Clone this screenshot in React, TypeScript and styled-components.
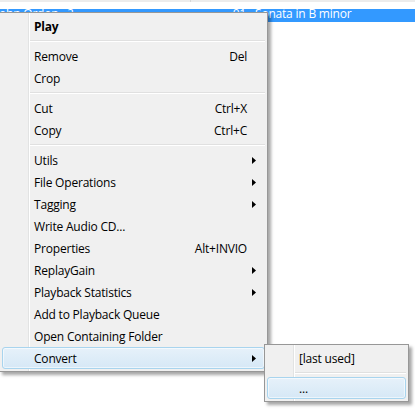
import React from "react";
import styled, { createGlobalStyle } from "styled-components";

const GlobalStyle = createGlobalStyle`
  html, body { margin: 0; padding: 0; background: #ffffff; }
  body { font-family: "Segoe UI", "Open Sans", "Noto Sans", sans-serif; font-size: 12px; }
`;

const Page = styled.div`
  position: relative;
  width: 415px;
  height: 410px;
  overflow: hidden;
  background: #ffffff;
`;

const HeaderEdge = styled.div`
  height: 2px;
  background: linear-gradient(to right, #ececec 0, #ececec 190px, #d6d6d6 190px, #d6d6d6 191px, #ececec 191px);
`;

const List = styled.div`
  padding-top: 7px;
`;

const Row = styled.div<{ $selected?: boolean }>`
  display: grid;
  grid-template-columns: 190px 56px 1fr;
  height: 13px;
  line-height: 13px;
  background: ${(p) => (p.$selected ? "#3399ff" : "transparent")};
  color: ${(p) => (p.$selected ? "#ffffff" : "#000000")};
  white-space: nowrap;
  letter-spacing: -0.2px;
`;

const Cell = styled.div<{ $align?: "left" | "right" }>`
  text-align: ${(p) => p.$align ?? "left"};
  padding-left: ${(p) => (p.$align === "right" ? "0" : "9px")};
  overflow-x: clip;
  margin-top: -2px;
`;

const FirstCell = styled(Cell)`
  padding-left: 0;
  text-indent: -1px;
`;

const Menu = styled.div<{ $left: number; $top: number; $width: number }>`
  position: absolute;
  left: ${(p) => p.$left}px;
  top: ${(p) => p.$top}px;
  width: ${(p) => p.$width}px;
  box-sizing: border-box;
  padding: 2px;
  border: 1px solid #979797;
  background-color: #f0f0f0;
  background-image: linear-gradient(
    to right,
    transparent 28px,
    #e2e3e3 28px,
    #e2e3e3 29px,
    #ffffff 29px,
    #ffffff 30px,
    transparent 30px
  );
  box-shadow: 3px 3px 3px rgba(0, 0, 0, 0.35);
  color: #000000;
  letter-spacing: -0.2px;
`;

const Item = styled.div<{ $active?: boolean; $bold?: boolean }>`
  display: grid;
  grid-template-columns: 1fr auto 17px;
  align-items: center;
  height: 22px;
  box-sizing: border-box;
  padding-left: 31px;
  font-weight: ${(p) => (p.$bold ? 700 : 400)};
  white-space: nowrap;
  border-radius: 3px;
  border: 1px solid ${(p) => (p.$active ? "#a8d4ee" : "transparent")};
  background: ${(p) =>
    p.$active ? "linear-gradient(to bottom, #e6f1fa, #d6e8f6)" : "transparent"};
  box-shadow: ${(p) => (p.$active ? "inset 0 0 0 1px rgba(255,255,255,0.55)" : "none")};
`;

const Label = styled.span``;

const Shortcut = styled.span`
  text-align: right;
`;

const ArrowCell = styled.span`
  display: flex;
  align-items: center;
  padding-left: 5px;
`;

const Separator = styled.div`
  height: 8px;
  box-sizing: border-box;
  padding-top: 3px;
  margin-left: 28px;
  &::after {
    content: "";
    display: block;
    border-top: 1px solid #e0e0e0;
    border-bottom: 1px solid #ffffff;
  }
`;

const Arrow = () => (
  <svg width="4" height="7" viewBox="0 0 4 7">
    <path d="M0 0 L4 3.5 L0 7 Z" fill="#000" />
  </svg>
);

type Entry =
  | { sep: true }
  | { label: string; shortcut?: string; sub?: boolean; bold?: boolean; active?: boolean };

const mainItems: Entry[] = [
  { label: "Play", bold: true },
  { sep: true },
  { label: "Remove", shortcut: "Del" },
  { label: "Crop" },
  { sep: true },
  { label: "Cut", shortcut: "Ctrl+X" },
  { label: "Copy", shortcut: "Ctrl+C" },
  { sep: true },
  { label: "Utils", sub: true },
  { label: "File Operations", sub: true },
  { label: "Tagging", sub: true },
  { label: "Write Audio CD..." },
  { label: "Properties", shortcut: "Alt+INVIO" },
  { label: "ReplayGain", sub: true },
  { label: "Playback Statistics", sub: true },
  { label: "Add to Playback Queue" },
  { label: "Open Containing Folder" },
  { label: "Convert", sub: true, active: true },
];

const subItems: Entry[] = [
  { label: "[last used]" },
  { sep: true },
  { label: "...", active: true },
];

const renderEntries = (entries: Entry[]) =>
  entries.map((e, i) =>
    "sep" in e ? (
      <Separator key={i} />
    ) : (
      <Item key={i} $active={e.active} $bold={e.bold}>
        <Label>{e.label}</Label>
        <Shortcut>{e.shortcut ?? ""}</Shortcut>
        <ArrowCell>{e.sub ? <Arrow /> : null}</ArrowCell>
      </Item>
    )
  );

export default function App() {
  return (
    <>
      <GlobalStyle />
      <Page>
        <HeaderEdge />
        <List>
          <Row $selected>
            <FirstCell>ohn Ordon - ?</FirstCell>
            <Cell $align="right">01</Cell>
            <Cell>Sonata in B minor</Cell>
          </Row>
        </List>
        <Menu $left={-1} $top={12} $width={269}>
          {renderEntries(mainItems)}
        </Menu>
        <Menu $left={264} $top={344} $width={145}>
          {renderEntries(subItems)}
        </Menu>
      </Page>
    </>
  );
}
